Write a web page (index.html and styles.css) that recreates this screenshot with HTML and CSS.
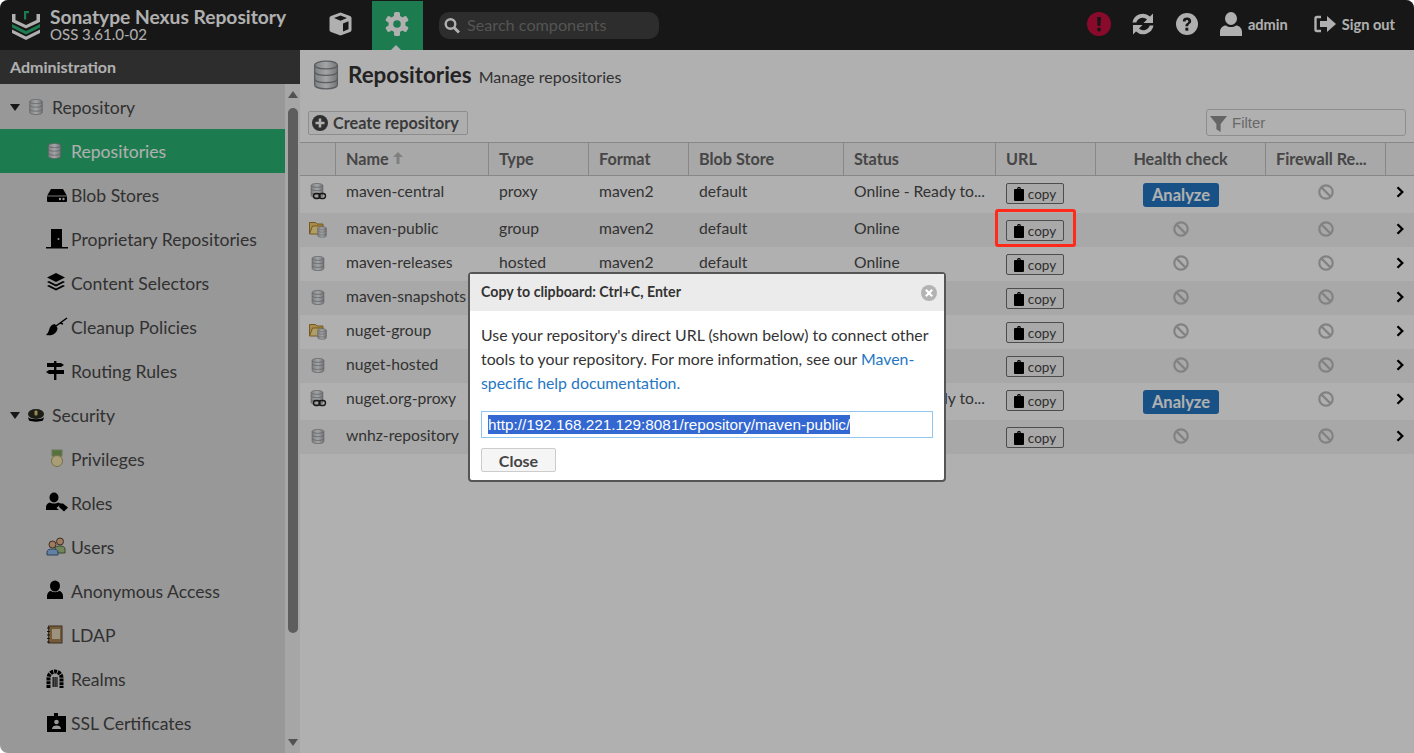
FILE: index.html
```html
<!DOCTYPE html>
<html lang="en">
<head>
<meta charset="utf-8">
<title>Repositories - Nexus Repository Manager</title>
<link rel="stylesheet" href="styles.css">
</head>
<body>
<svg class="defs" width="0" height="0" aria-hidden="true">
  <defs>
    <linearGradient id="dbg" x1="0" x2="1" y1="0" y2="0"><stop offset="0" stop-color="#b9bcbf"/><stop offset=".5" stop-color="#eceef0"/><stop offset="1" stop-color="#a9acb0"/></linearGradient>
    <symbol id="db" viewBox="0 0 16 18">
      <path d="M1 3c0-1.500 3-2.500 7-2.500s7 1 7 2.500v12c0 1.500-3 2.500-7 2.500s-7-1-7-2.500z" fill="url(#dbg)" stroke="#85888c" stroke-width=".8"/>
      <path d="M1 7c0 1.300 3 2.200 7 2.200s7-.9 7-2.200M1 11.500c0 1.300 3 2.200 7 2.200s7-.9 7-2.200M1 3c0 1.300 3 2.200 7 2.200s7-.9 7-2.200" fill="none" stroke="#85888c" stroke-width=".8"/>
    </symbol>
    <symbol id="proxy" viewBox="0 0 18 18">
      <use href="#db" x="1" y="0" width="14" height="15"/>
      <rect x="4.500" y="10.500" width="6.500" height="5" rx="2.400" fill="none" stroke="#222" stroke-width="1.400"/>
      <rect x="10" y="10.500" width="6.500" height="5" rx="2.400" fill="none" stroke="#222" stroke-width="1.400"/>
    </symbol>
    <symbol id="group" viewBox="0 0 18 18">
      <path d="M.5 2.500h6l1.500 1.500h6v3H5L2.500 13.500H.5z" fill="#f5cb68" stroke="#a88030"/>
      <path d="M.5 14l3-8h10v8z" fill="#ffe496" stroke="#a88030"/>
      <use href="#db" x="8" y="6" width="10" height="12"/>
    </symbol>
    <symbol id="ban" viewBox="0 0 16 16">
      <circle cx="8" cy="8" r="6.700" fill="none" stroke="#bdbdbd" stroke-width="2.200"/>
      <path d="M3.400 3.400l9.200 9.200" stroke="#bdbdbd" stroke-width="2.200"/>
    </symbol>
    <symbol id="clip" viewBox="0 0 10 14">
      <path d="M1 2h2.200V1.400a1.800 1.400 0 0 1 3.600 0V2H9a1 1 0 0 1 1 1v10a1 1 0 0 1-1 1H1a1 1 0 0 1-1-1V3a1 1 0 0 1 1-1z" fill="#000"/>
      <rect x="4.300" y="1" width="1.400" height="1" fill="#999"/>
    </symbol>
    <symbol id="chev" viewBox="0 0 8 12">
      <path d="M1.500 1.200L6.300 6l-4.800 4.800" fill="none" stroke="#000" stroke-width="2.300"/>
    </symbol>
  </defs>
</svg>

<div class="app">
  <header class="topbar">
    <div class="brand">
      <svg class="logo" viewBox="0 0 30 30" aria-hidden="true">
        <path d="M1 4h3.500v6L15 15l10.500-5V4H29v8l-14 6.500L1 12z" fill="#fff"/>
        <path d="M1 14l14 7 14-7v3.500l-14 7-14-7z" fill="#29b473"/>
        <path d="M1 19.500l14 7 14-7V23l-14 7-14-7z" fill="#fff"/>
        <path d="M13 1h5v2.200h-2.800v6.300H13z" fill="#29b473"/>
      </svg>
      <div class="brand-text">
        <div class="brand-name">Sonatype Nexus Repository</div>
        <div class="brand-version">OSS 3.61.0-02</div>
      </div>
    </div>
    <button class="nav-btn nav-browse" aria-label="Browse">
      <svg viewBox="0 0 24 24" width="25" height="24" aria-hidden="true">
        <path d="M12 .5l9.500 3.500q1.500.6 1.500 2v12q0 1.400-1.500 2L12 23.500 2.500 20Q1 19.400 1 18V6q0-1.400 1.500-2z" fill="#fff"/>
        <path d="M12 3.500L18.500 6 12 8.800 5.500 6zM14.500 11.500l5.500-2.300v8l-5.500 2.300z" fill="#222"/>
      </svg>
    </button>
    <button class="nav-btn nav-active" aria-label="Administration">
      <svg viewBox="0 0 24 24" width="24" height="24" aria-hidden="true">
        <g fill="#fff">
          <rect x="9" y="0" width="6" height="24" rx="1.500"/>
          <rect x="9" y="0" width="6" height="24" rx="1.500" transform="rotate(60 12 12)"/>
          <rect x="9" y="0" width="6" height="24" rx="1.500" transform="rotate(120 12 12)"/>
          <circle cx="12" cy="12" r="8.500"/>
        </g>
        <circle cx="12" cy="12" r="3.800" fill="#29b473"/>
      </svg>
    </button>
    <div class="search">
      <svg viewBox="0 0 16 16" width="16" height="17" aria-hidden="true">
        <circle cx="6.500" cy="6.500" r="4.800" fill="none" stroke="#fff" stroke-width="2.400"/>
        <path d="M10 10l5 5" stroke="#fff" stroke-width="3"/>
      </svg>
      <span class="search-text">Search components</span>
    </div>
    <div class="top-actions">
      <svg class="alert" viewBox="0 0 24 24" aria-label="Alert">
        <circle cx="12" cy="12" r="12" fill="#c80f40"/>
        <path d="M10 5h4l-.6 9h-2.800z" fill="#222"/>
        <circle cx="12" cy="17.500" r="2" fill="#222"/>
      </svg>
      <svg class="refresh" viewBox="0 0 24 24" aria-label="Refresh">
        <path d="M1.500 10.500A10.600 10.600 0 0 1 19 4.500L22 1.500v9.500h-9.500l3.500-3.500A6.500 6.500 0 0 0 5.300 10.500zM22.500 13.500A10.600 10.600 0 0 1 5 19.500L2 22.500V13h9.500L8 16.500a6.500 6.500 0 0 0 10.700-3z" fill="#fff"/>
      </svg>
      <svg class="help" viewBox="0 0 22 22" aria-label="Help">
        <circle cx="11" cy="11" r="11" fill="#fff"/>
        <path d="M6.800 8.500a4.200 4 0 0 1 8.400-.2c0 2.600-3 2.700-3 5h-2.800c0-3.500 3-3.300 3-4.800a1.400 1.400 0 0 0-2.800 0z" fill="#222"/>
        <rect x="9.400" y="14.700" width="2.900" height="3" fill="#222"/>
      </svg>
      <div class="user">
        <svg viewBox="0 0 22 24" width="22" height="24" aria-hidden="true">
          <ellipse cx="11" cy="6.500" rx="6" ry="6.500" fill="#fff"/>
          <path d="M0 24v-4c0-4 3-6.500 6-6.500 1.500 1 3 1.500 5 1.500s3.500-.5 5-1.500c3 0 6 2.500 6 6.500v4z" fill="#fff"/>
        </svg>
        <span>admin</span>
      </div>
      <div class="signout">
        <svg viewBox="0 0 22 18" width="22" height="18" aria-hidden="true">
          <path d="M7 2H3a1.500 1.500 0 0 0-1.500 1.500v11A1.500 1.500 0 0 0 3 16h4" fill="none" stroke="#fff" stroke-width="2.400"/>
          <path d="M6 6h7V1l9 8-9 8v-5H6z" fill="#fff"/>
        </svg>
        <span>Sign out</span>
      </div>
    </div>
  </header>

  <div class="workspace">
    <aside class="sidebar">
      <div class="side-title">Administration</div>
      <div class="side-body">
        <nav class="tree">
          <div class="tree-row tree-parent"><span class="caret"></span><svg class="ico-small"><use href="#db"/></svg><span>Repository</span></div>
          <div class="tree-row tree-child tree-selected"><svg class="ico-db"><use href="#db"/></svg><span>Repositories</span></div>
          <div class="tree-row tree-child">
            <svg class="ico" viewBox="0 0 22 22"><path d="M5 5h12l4 7v5a1 1 0 0 1-1 1H2a1 1 0 0 1-1-1v-5z" fill="#000"/><path d="M1 12h20" stroke="#dcdcdc" stroke-width=".8"/><circle cx="14" cy="15" r="1.200" fill="#dcdcdc"/><circle cx="17.500" cy="15" r="1.200" fill="#dcdcdc"/></svg>
            <span>Blob Stores</span></div>
          <div class="tree-row tree-child">
            <svg class="ico" viewBox="0 0 22 22"><path d="M5 1h11v18h6v1.500H0V19h5z" fill="#000"/><circle cx="12.500" cy="11" r="1" fill="#dcdcdc"/></svg>
            <span>Proprietary Repositories</span></div>
          <div class="tree-row tree-child">
            <svg class="ico" viewBox="0 0 22 22"><path d="M10 1l9 4.500-9 4.500-9-4.500z" fill="#000"/><path d="M1 9l2-1 7 3.500L17 8l2 1-9 4.500zM1 13l2-1 7 3.500 7-3.500 2 1-9 4.500z" fill="#000" transform="translate(0 1)"/></svg>
            <span>Content Selectors</span></div>
          <div class="tree-row tree-child">
            <svg class="ico" viewBox="0 0 22 22"><path d="M9 8c-3 0-5 2-6 6-.5 2-1.500 3.500-3 5 3 .5 6 .5 8-1 2-1.500 3.500-3.500 3.500-6z" fill="#000"/><path d="M10 10L21 2M14 7l3 1" stroke="#000" stroke-width="1.500" fill="none"/></svg>
            <span>Cleanup Policies</span></div>
          <div class="tree-row tree-child">
            <svg class="ico" viewBox="0 0 22 22"><path d="M8 1h2.400v19H8z" fill="#000"/><path d="M1 3h14l3 2-3 2H1zM3 10h15v4H3L0 12z" fill="#000"/></svg>
            <span>Routing Rules</span></div>
          <div class="tree-row tree-parent"><span class="caret"></span>
            <svg class="ico-small" viewBox="0 0 18 14"><ellipse cx="9" cy="6" rx="8" ry="5" fill="#2a2a20"/><path d="M1 9c2 3 14 3 16 0l-1 3.500c-3 1.500-11 1.500-14 0z" fill="#000"/><rect x="7.500" y="2.500" width="3" height="5" rx="1" fill="#d8c878"/></svg>
            <span>Security</span></div>
          <div class="tree-row tree-child">
            <svg class="ico" viewBox="0 0 22 22"><rect x="6" y="2" width="10" height="6" fill="#7ba45a" stroke="#9ab078"/><circle cx="11" cy="13" r="5.500" fill="#f3e6ad" stroke="#b4a068"/></svg>
            <span>Privileges</span></div>
          <div class="tree-row tree-child">
            <svg class="ico" viewBox="0 0 22 22"><ellipse cx="8" cy="5.500" rx="4.500" ry="5" fill="#000"/><path d="M0 18v-3c0-2.500 2-4 4-4.500 1 .8 2.500 1 4 1s3-.2 4-1c1 .2 2 .8 2.700 1.500L10.500 16 13 18z" fill="#000"/><path d="M13.500 11.500H17l5 4-4 4-5-4.500z" fill="#000"/></svg>
            <span>Roles</span></div>
          <div class="tree-row tree-child">
            <svg class="ico" viewBox="0 0 22 22"><circle cx="14" cy="5.500" r="3.500" fill="#e6b48a" stroke="#5a4030"/><path d="M9 16v-3c0-2 2-3 5-3s5 1 5 3v4H9z" fill="#a4c484" stroke="#55683f"/><circle cx="6.500" cy="8.500" r="3.500" fill="#e6b48a" stroke="#5a4030"/><path d="M1 19v-3c0-2 2-3 5.500-3S12 14 12 16v3z" fill="#8fbcec" stroke="#3f5f84"/></svg>
            <span>Users</span></div>
          <div class="tree-row tree-child">
            <svg class="ico" viewBox="0 0 22 22"><ellipse cx="9" cy="6" rx="5" ry="5.500" fill="#000"/><path d="M1 19v-3c0-3 2-5 4-5 1 .8 2.500 1.200 4 1.200s3-.4 4-1.200c2 0 4 2 4 5v3z" fill="#000"/></svg>
            <span>Anonymous Access</span></div>
          <div class="tree-row tree-child">
            <svg class="ico" viewBox="0 0 22 22"><rect x="2.500" y="2" width="13.500" height="17" fill="#a88558" stroke="#5c4428"/><rect x="6" y="5" width="8" height="10" fill="#e4d4b6"/><path d="M1 4h3M1 7.500h3M1 11h3M1 14.500h3M1 18h3" stroke="#222" stroke-width="1"/></svg>
            <span>LDAP</span></div>
          <div class="tree-row tree-child">
            <svg class="ico" viewBox="0 0 22 22"><path d="M2.500 20V10a6.500 6.500 0 0 1 13 0v10" fill="none" stroke="#000" stroke-width="4" stroke-dasharray="3 .8"/><path d="M6.500 9h1.400v10H6.500zM8.400 9h1.400v10H8.400zM10.300 9h1.300v10h-1.300z" fill="#222"/></svg>
            <span>Realms</span></div>
          <div class="tree-row tree-child">
            <svg class="ico" viewBox="0 0 22 22"><path d="M1 4h7V1h4v3h8v16H1z" fill="#000"/><circle cx="10.500" cy="10" r="2.300" fill="#dcdcdc"/><path d="M6 17c0-2.500 2-3.500 4.500-3.500S15 14.500 15 17z" fill="#dcdcdc"/></svg>
            <span>SSL Certificates</span></div>
        </nav>
        <div class="side-scroll">
          <span class="arrow-up"></span>
          <span class="thumb"></span>
          <span class="arrow-down"></span>
        </div>
      </div>
    </aside>

    <main class="main">
      <div class="page-head">
        <svg class="page-icon"><use href="#db"/></svg>
        <span class="page-title">Repositories</span>
        <span class="page-sub">Manage repositories</span>
      </div>
      <div class="toolbar">
        <button class="create">
          <svg viewBox="0 0 16 16" width="16" height="16" aria-hidden="true"><circle cx="8" cy="8" r="8" fill="#444"/><path d="M6.700 3.500h2.600v3.200h3.200v2.600H9.300v3.200H6.700V9.300H3.500V6.700h3.200z" fill="#fff"/></svg>
          <span class="create-label">Create repository</span>
        </button>
        <div class="filter">
          <svg viewBox="0 0 16 16" width="17" height="17" aria-hidden="true"><path d="M0 1h16L10 8.500V16l-4-2.500V8.500z" fill="#939393"/></svg>
          <span>Filter</span>
        </div>
      </div>

      <div class="grid-row grid-head">
        <div class="cell"></div>
        <div class="cell">Name <svg class="sort" viewBox="0 0 10 12"><path d="M5 0l5 5H6.500v7h-3V5H0z" fill="#b8b8b8"/></svg></div>
        <div class="cell">Type</div>
        <div class="cell">Format</div>
        <div class="cell">Blob Store</div>
        <div class="cell">Status</div>
        <div class="cell">URL</div>
        <div class="cell center">Health check</div>
        <div class="cell">Firewall Re...</div>
        <div class="cell last"></div>
      </div>

      <div class="grid-row row-tall">
        <div class="cell"><svg class="row-ico"><use href="#proxy"/></svg></div>
        <div class="cell">maven-central</div><div class="cell">proxy</div><div class="cell">maven2</div><div class="cell">default</div><div class="cell">Online - Ready to...</div>
        <div class="cell"><button class="copy"><svg><use href="#clip"/></svg>copy</button></div>
        <div class="cell center"><button class="analyze">Analyze</button></div>
        <div class="cell center"><svg class="ban"><use href="#ban"/></svg></div>
        <div class="cell"><svg class="chev"><use href="#chev"/></svg></div>
      </div>
      <div class="grid-row striped">
        <div class="cell"><svg class="row-ico"><use href="#group"/></svg></div>
        <div class="cell">maven-public</div><div class="cell">group</div><div class="cell">maven2</div><div class="cell">default</div><div class="cell">Online</div>
        <div class="cell"><button class="copy"><svg><use href="#clip"/></svg>copy</button></div>
        <div class="cell center"><svg class="ban"><use href="#ban"/></svg></div>
        <div class="cell center"><svg class="ban"><use href="#ban"/></svg></div>
        <div class="cell"><svg class="chev"><use href="#chev"/></svg></div>
      </div>
      <div class="grid-row">
        <div class="cell"><svg class="row-db"><use href="#db"/></svg></div>
        <div class="cell">maven-releases</div><div class="cell">hosted</div><div class="cell">maven2</div><div class="cell">default</div><div class="cell">Online</div>
        <div class="cell"><button class="copy"><svg><use href="#clip"/></svg>copy</button></div>
        <div class="cell center"><svg class="ban"><use href="#ban"/></svg></div>
        <div class="cell center"><svg class="ban"><use href="#ban"/></svg></div>
        <div class="cell"><svg class="chev"><use href="#chev"/></svg></div>
      </div>
      <div class="grid-row striped">
        <div class="cell"><svg class="row-db"><use href="#db"/></svg></div>
        <div class="cell">maven-snapshots</div><div class="cell">hosted</div><div class="cell">maven2</div><div class="cell">default</div><div class="cell">Online</div>
        <div class="cell"><button class="copy"><svg><use href="#clip"/></svg>copy</button></div>
        <div class="cell center"><svg class="ban"><use href="#ban"/></svg></div>
        <div class="cell center"><svg class="ban"><use href="#ban"/></svg></div>
        <div class="cell"><svg class="chev"><use href="#chev"/></svg></div>
      </div>
      <div class="grid-row">
        <div class="cell"><svg class="row-ico"><use href="#group"/></svg></div>
        <div class="cell">nuget-group</div><div class="cell">group</div><div class="cell">nuget</div><div class="cell">default</div><div class="cell">Online</div>
        <div class="cell"><button class="copy"><svg><use href="#clip"/></svg>copy</button></div>
        <div class="cell center"><svg class="ban"><use href="#ban"/></svg></div>
        <div class="cell center"><svg class="ban"><use href="#ban"/></svg></div>
        <div class="cell"><svg class="chev"><use href="#chev"/></svg></div>
      </div>
      <div class="grid-row striped">
        <div class="cell"><svg class="row-db"><use href="#db"/></svg></div>
        <div class="cell">nuget-hosted</div><div class="cell">hosted</div><div class="cell">nuget</div><div class="cell">default</div><div class="cell">Online</div>
        <div class="cell"><button class="copy"><svg><use href="#clip"/></svg>copy</button></div>
        <div class="cell center"><svg class="ban"><use href="#ban"/></svg></div>
        <div class="cell center"><svg class="ban"><use href="#ban"/></svg></div>
        <div class="cell"><svg class="chev"><use href="#chev"/></svg></div>
      </div>
      <div class="grid-row row-tall">
        <div class="cell"><svg class="row-ico"><use href="#proxy"/></svg></div>
        <div class="cell">nuget.org-proxy</div><div class="cell">proxy</div><div class="cell">nuget</div><div class="cell">default</div><div class="cell">Online - Ready to...</div>
        <div class="cell"><button class="copy"><svg><use href="#clip"/></svg>copy</button></div>
        <div class="cell center"><button class="analyze">Analyze</button></div>
        <div class="cell center"><svg class="ban"><use href="#ban"/></svg></div>
        <div class="cell"><svg class="chev"><use href="#chev"/></svg></div>
      </div>
      <div class="grid-row striped">
        <div class="cell"><svg class="row-db"><use href="#db"/></svg></div>
        <div class="cell">wnhz-repository</div><div class="cell">hosted</div><div class="cell">maven2</div><div class="cell">default</div><div class="cell">Online</div>
        <div class="cell"><button class="copy"><svg><use href="#clip"/></svg>copy</button></div>
        <div class="cell center"><svg class="ban"><use href="#ban"/></svg></div>
        <div class="cell center"><svg class="ban"><use href="#ban"/></svg></div>
        <div class="cell"><svg class="chev"><use href="#chev"/></svg></div>
      </div>
    </main>
  </div>
  <span class="notch"></span>
  <div class="mask"></div>
  <div class="annotation"></div>

  <section class="modal" role="dialog" aria-label="Copy to clipboard">
    <div class="modal-head">
      <span>Copy to clipboard: Ctrl+C, Enter</span>
      <svg class="modal-x" viewBox="0 0 16 16" aria-label="Close"><circle cx="8" cy="8" r="8" fill="#b3b3b3"/><path d="M4.800 4.800l6.400 6.400M11.200 4.800l-6.400 6.400" stroke="#fff" stroke-width="2.200"/></svg>
    </div>
    <div class="modal-body">
      <p class="modal-text">Use your repository's direct URL (shown below) to connect other tools to your repository. For more information, see our <a href="#" class="link">Maven-specific help documentation</a><span class="link">.</span></p>
      <div class="url-box"><span class="url-sel">http://192.168.221.129:8081/repository/maven-public/</span></div>
      <button class="close-btn">Close</button>
    </div>
  </section>
</div>
</body>
</html>
```
FILE: styles.css
```css
* { box-sizing: border-box; }
html, body { margin: 0; height: 100%; background: #fff; overflow: hidden; }
body { font-family: "Lato", "Liberation Sans", sans-serif; color: #333; }
.defs { position: absolute; }
button { font-family: inherit; }

.app { position: relative; width: 1414px; height: 753px; display: flex; flex-direction: column; overflow: hidden; border-radius: 8px 8px 0 8px; background: #fff; }

.topbar { height: 50px; flex: none; background: #222; display: flex; align-items: center; padding-left: 11px; color: #fff; }
.brand { display: flex; align-items: center; width: 304px; gap: 9px; }
.logo { width: 30px; height: 30px; flex: none; }
.brand-text { margin-bottom: 2px; }
.brand-name { font-size: 19.2px; font-weight: 700; line-height: 20px; color: #fff; white-space: nowrap; }
.brand-version { font-size: 15px; line-height: 15px; color: #fff; }
.nav-btn { width: 51px; height: 49px; border: 0; background: none; padding: 0; display: flex; align-items: center; justify-content: center; margin-top: 1px; }
.nav-btn svg { margin-bottom: 3px; }
.nav-browse { margin-right: 6px; }
.nav-active { background: #29b473; }
.nav-active svg { margin-right: 2px; }
.search { margin-left: 16px; width: 220px; height: 27px; border-radius: 10px; background: #424242; display: flex; align-items: center; padding-left: 5px; gap: 7px; font-size: 16.200px; }
.search-text { color: #7a7a7a; margin-bottom: 2px; }
.top-actions { margin-left: auto; display: flex; align-items: center; padding-right: 19px; margin-bottom: 2px; }
.top-actions > svg { width: 24px; height: 24px; flex: none; }
.alert { margin-right: 20px; }
.refresh { margin-right: 21px; }
.top-actions > .help { width: 22px; height: 22px; margin-right: 22px; }
.user { display: flex; align-items: center; gap: 6px; font-size: 14.600px; font-weight: 700; color: #fff; margin-right: 26px; }
.signout { display: flex; align-items: center; gap: 6px; font-size: 14.600px; font-weight: 700; color: #fff; }

.workspace { flex: 1; display: flex; min-height: 0; }
.sidebar { width: 300px; flex: none; display: flex; flex-direction: column; background: #dcdcdc; }
.side-title { height: 34px; flex: none; background: #424242; color: #fff; font-size: 16px; font-weight: 700; line-height: 34px; padding-left: 10px; }
.side-body { flex: 1; display: flex; min-height: 0; }
.tree { width: 285px; flex: none; padding-top: 1px; }
.tree-row { height: 44px; display: flex; align-items: center; font-size: 17.600px; color: #484848; white-space: nowrap; }
.tree-parent { padding-left: 10px; }
.tree-child { padding-left: 46px; }
.tree-selected { background: #29b473; color: #fff; }
.caret { width: 0; height: 0; border-left: 5px solid transparent; border-right: 5px solid transparent; border-top: 7px solid #222; margin-right: 7px; }
.ico-small { width: 18px; height: 16px; margin-right: 7px; }
.ico-db { width: 15px; height: 16px; margin: 0 9px 0 1px; }
.ico { width: 22px; height: 22px; margin-right: 3px; flex: none; }
.side-scroll { position: relative; width: 15px; background: #f1f1f1; display: flex; flex-direction: column; align-items: center; padding-top: 7px; }
.arrow-up { width: 0; height: 0; border-left: 5px solid transparent; border-right: 5px solid transparent; border-bottom: 7px solid #777; }
.thumb { width: 10px; height: 525px; margin-top: 10px; background: #878787; border-radius: 5px; }
.arrow-down { width: 0; height: 0; border-left: 5px solid transparent; border-right: 5px solid transparent; border-top: 7px solid #777; margin-top: auto; margin-bottom: 7px; }

.main { flex: 1; min-width: 0; background: #fff; }
.page-head { height: 50px; margin-bottom: 9px; display: flex; align-items: center; padding-left: 13px; }
.page-icon { width: 26px; height: 30px; margin-right: 9px; }
.page-title { font-size: 22.400px; font-weight: 700; color: #333; margin-right: 7px; padding-bottom: 2px; }
.page-sub { font-size: 16px; margin-top: 2px; color: #484848; }
.toolbar { height: 33px; display: flex; align-items: flex-start; justify-content: space-between; padding: 0 8px; }
.create { height: 24px; width: 160px; padding: 0 3px; margin-top: 2px; display: flex; align-items: center; gap: 5px; background: #fcfcfc; border: 1px solid #ccc; border-radius: 2px; font-size: 16.200px; font-weight: 700; color: #555; white-space: nowrap; }
.create-label { margin-bottom: 2px; }
.filter { width: 200px; height: 27px; border: 1px solid #ccc; border-radius: 3px; display: flex; align-items: center; padding-left: 3px; gap: 5px; font-family: "Liberation Sans", sans-serif; font-size: 15px; color: #999; }
.filter svg { margin-top: 1px; }

.grid-row { display: grid; grid-template-columns: 36px 153px 100px 100px 155px 152px 100px 170px 120px 29px; height: 34px; font-size: 15.700px; align-items: start; }
.row-tall { height: 37px; }
.striped { background: #f3f3f3; }
.cell { display: flex; align-items: center; height: 32px; padding: 0 0 2px 10px; white-space: nowrap; overflow: hidden; color: #4a4a4a; min-width: 0; }
.center { justify-content: center; padding-left: 0; }
.grid-head { height: 34px; background: #f3f3f3; border-top: 1px solid #c4c4c4; border-bottom: 1px solid #c4c4c4; font-size: 16.200px; font-weight: 700; align-items: stretch; }
.grid-head .cell { height: auto; border-right: 1px solid #c4c4c4; color: #666; }
.grid-head .last { border-right: 0; }
.sort { width: 10px; height: 12px; margin-left: 4px; }
.row-ico { width: 18px; height: 18px; margin: 2px 0 0 -1px; }
.row-db { width: 14px; height: 15px; margin: 2px 0 0 1px; }
.copy { display: inline-flex; align-items: center; justify-content: center; gap: 4px; width: 58px; height: 21px; padding: 0; margin-top: 5px; background: #f5f5f5; border: 1px solid #707070; border-radius: 2px; font-size: 13.500px; color: #444; }
.copy svg { width: 10px; height: 14px; }
.analyze { width: 76px; height: 24px; padding: 0; margin-top: 8px; border: 0; border-radius: 3px; background: #2476c3; color: #fff; font-size: 16.500px; font-weight: 700; }
.ban { width: 16px; height: 16px; margin-top: 2px; }
.chev { width: 8px; height: 12px; margin-top: 2px; }

.notch { position: absolute; left: 391px; top: 45px; width: 0; height: 0; border-left: 5px solid transparent; border-right: 5px solid transparent; border-bottom: 5px solid #fff; }
.mask { position: absolute; inset: 0; background: rgba(0, 0, 0, .31); }
.annotation { position: absolute; left: 995px; top: 209px; width: 81px; height: 38px; border: 3px solid #ff2a1a; border-radius: 3px; }

.modal { position: absolute; left: 468px; top: 272px; width: 478px; height: 210px; background: #fff; border: 2px solid #555; border-radius: 4px; }
.modal-head { height: 37px; padding: 0 7px 2px 11px; background: #ebebeb; display: flex; align-items: center; justify-content: space-between; font-size: 14.200px; font-weight: 700; color: #333; }
.modal-x { width: 16px; height: 16px; margin-top: 2px; }
.modal-body { padding: 12px 11px 0; }
.modal-text { margin: 0; font-size: 15.850px; line-height: 24px; color: #333; }
.link { color: #2476c3; text-decoration: none; }
.url-box { margin-top: 16px; width: 452px; height: 27px; border: 1px solid #90c6f0; padding-left: 6px; display: flex; align-items: center; font-family: "Liberation Sans", sans-serif; font-size: 15.300px; }
.url-sel { display: inline-block; background: #3367d1; color: #fff; line-height: 19px; white-space: nowrap; }
.close-btn { display: block; margin-top: 10px; width: 75px; height: 24px; padding: 0; background: #f5f5f5; border: 1px solid #ccc; border-radius: 2px; font-size: 16px; font-weight: 700; color: #444; }
```
